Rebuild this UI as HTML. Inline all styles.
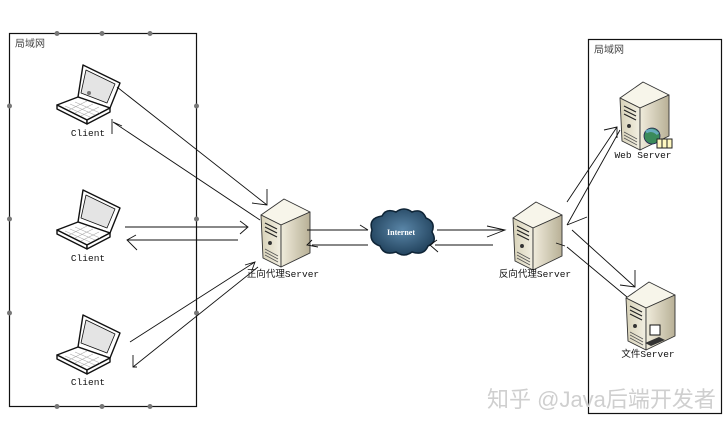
<!DOCTYPE html>
<html><head><meta charset="utf-8"><style>
html,body{margin:0;padding:0;background:#fff;width:727px;height:426px;overflow:hidden}
svg text{font-family:"Liberation Mono","Noto Sans CJK SC",monospace}
</style></head><body>
<svg width="727" height="426" viewBox="0 0 727 426" xmlns="http://www.w3.org/2000/svg">
<defs>
<linearGradient id="fr" x1="0" y1="0" x2="1" y2="0"><stop offset="0" stop-color="#d8d2b8"/><stop offset="1" stop-color="#f2efe2"/></linearGradient>
<linearGradient id="sd" x1="0" y1="0" x2="1" y2="0"><stop offset="0" stop-color="#f0ecdc"/><stop offset="1" stop-color="#b8b096"/></linearGradient>
<radialGradient id="cl" cx="0.5" cy="0.45" r="0.6"><stop offset="0" stop-color="#5a86a8"/><stop offset="1" stop-color="#1e3e58"/></radialGradient>
<g id="lap" stroke="#111" stroke-width="1.4" stroke-linejoin="round">
<polygon points="26,0 63,18 53,43 21,32" fill="#fff"/>
<polygon points="29,5 58,19 50,38 24,28" fill="#e4e4e4" stroke-width="0.8"/>
<polygon points="21,32 0,40 30,55 53,43" fill="#fff"/>
<polygon points="0,40 30,55 30,59 0,44" fill="#fff"/>
<polygon points="30,55 53,43 53,47 30,59" fill="#fff"/>
<path d="M8,41 L33,52 M13,39 L38,50 M18,37 L43,48 M12,45 L30,36 M18,48 L36,39 M24,51 L42,42" stroke="#aaa" stroke-width="0.6" fill="none"/>
</g>
<g id="srv" stroke="#333" stroke-width="0.9" stroke-linejoin="round">
<polygon points="0,16 23,0 49,13 20,26" fill="#f7f5ea"/>
<polygon points="0,16 20,26 20,68 2,59" fill="url(#fr)"/>
<polygon points="20,26 49,13 49,54 20,68" fill="url(#sd)"/>
<path d="M4,24 L16,30 M4,28 L16,34 M4,32 L16,38" stroke="#222" stroke-width="1.2"/>
<circle cx="9" cy="44" r="1.5" fill="#333"/>
<path d="M4,50 L17,57 M4,53 L17,60 M4,56 L17,63" stroke="#555" stroke-width="0.8"/>
</g>
</defs>

<rect x="9.5" y="33.5" width="187" height="373" fill="none" stroke="#111" stroke-width="1.2"/>
<g fill="#777">
<circle cx="9.5" cy="106" r="2.5"/><circle cx="196.5" cy="106" r="2.5"/>
<circle cx="9.5" cy="219" r="2.5"/><circle cx="196.5" cy="219" r="2.5"/>
<circle cx="9.5" cy="313" r="2.5"/><circle cx="196.5" cy="313" r="2.5"/>
<circle cx="57" cy="33.5" r="2.5"/><circle cx="102" cy="33.5" r="2.5"/><circle cx="150" cy="33.5" r="2.5"/>
<circle cx="57" cy="406.5" r="2.5"/><circle cx="102" cy="406.5" r="2.5"/><circle cx="150" cy="406.5" r="2.5"/>
</g>
<text x="15" y="47" font-size="10" fill="#444">局域网</text>

<rect x="588.5" y="39.5" width="133" height="374" fill="none" stroke="#111" stroke-width="1.2"/>
<text x="594" y="53" font-size="10" fill="#444">局域网</text>

<use href="#lap" x="57" y="65"/>
<use href="#lap" x="57" y="190"/>
<use href="#lap" x="57" y="315"/>
<circle cx="89" cy="93" r="2" fill="#777"/>
<text x="88" y="136" font-size="9.5" text-anchor="middle" fill="#111">Client</text>
<text x="88" y="261" font-size="9.5" text-anchor="middle" fill="#111">Client</text>
<text x="88" y="385" font-size="9.5" text-anchor="middle" fill="#111">Client</text>

<use href="#srv" x="261" y="199"/>
<text x="283" y="277" font-size="9.5" text-anchor="middle" fill="#111">正向代理Server</text>
<use href="#srv" x="513" y="202"/>
<text x="535" y="277" font-size="9.5" text-anchor="middle" fill="#111">反向代理Server</text>
<use href="#srv" x="620" y="82"/>
<circle cx="652" cy="136" r="8" fill="#3a8a5a" stroke="#225" stroke-width="0.8"/>
<path d="M646,132 q6,-4 12,2" stroke="#6ab" stroke-width="3" fill="none"/>
<rect x="657" y="139" width="15" height="9" fill="#fff8c0" stroke="#222" stroke-width="1"/>
<path d="M662,139 v9 M667,139 v9" stroke="#222"/>
<text x="643" y="158" font-size="9.5" text-anchor="middle" fill="#111">Web Server</text>
<use href="#srv" x="626" y="282"/>
<rect x="650" y="325" width="10" height="10" fill="#fff" stroke="#111"/>
<path d="M645,343 l14,-6 l6,3 l-14,6 z" fill="#333"/>
<text x="648" y="357" font-size="9.5" text-anchor="middle" fill="#111">文件Server</text>

<path d="M372,230 q-4,-12 10,-14 q4,-8 14,-4 q8,-6 16,0 q10,-4 14,6 q10,4 6,14 q6,10 -4,14 q-4,10 -16,6 q-8,6 -16,0 q-12,4 -16,-6 q-12,-4 -8,-16z" fill="url(#cl)" stroke="#0e2436" stroke-width="1.5"/>
<text x="401" y="235" font-size="8" font-weight="bold" text-anchor="middle" fill="#fff" style="font-family:'Liberation Serif',serif">Internet</text>

<g stroke="#111" stroke-width="0.9" fill="none">
<path d="M117,87 L267,205 M267,189 L267,205 L252,203"/>
<path d="M113,122 L260,220 M112,119 L112,134 M113,122 L122,126"/>
<path d="M125,227 L247,227 M240,221 L248,227 L240,234"/>
<path d="M127,240 L238,240 M136,235 L127,240 L137,250"/>
<path d="M130,342 L255,262 M245,265 L255,262 L252,270"/>
<path d="M133,367 L258,267 M133,355 L133,367 L137,367"/>
<path d="M307,230 L368,230 M360,225 L368,230"/>
<path d="M312,245 L368,245 M312,240 L307,245 L318,247"/>
<path d="M437,230 L505,230 M487,226 L505,230 L487,237"/>
<path d="M435,245 L493,245 M437,240 L430,245 L438,252"/>
<path d="M567,202 L617,127 M604,130 L617,127 L617,138"/>
<path d="M567,225 L620,130 M567,225 L587,217"/>
<path d="M572,230 L635,287 M635,270 L635,287 L620,285"/>
<path d="M567,247 L627,297 M565,246 L556,243"/>
</g>

<text x="487" y="407" font-size="22" fill="#cfcfcf" style="font-family:'Liberation Sans','Noto Sans CJK SC',sans-serif">知乎 @Java后端开发者</text>
</svg>
</body></html>
